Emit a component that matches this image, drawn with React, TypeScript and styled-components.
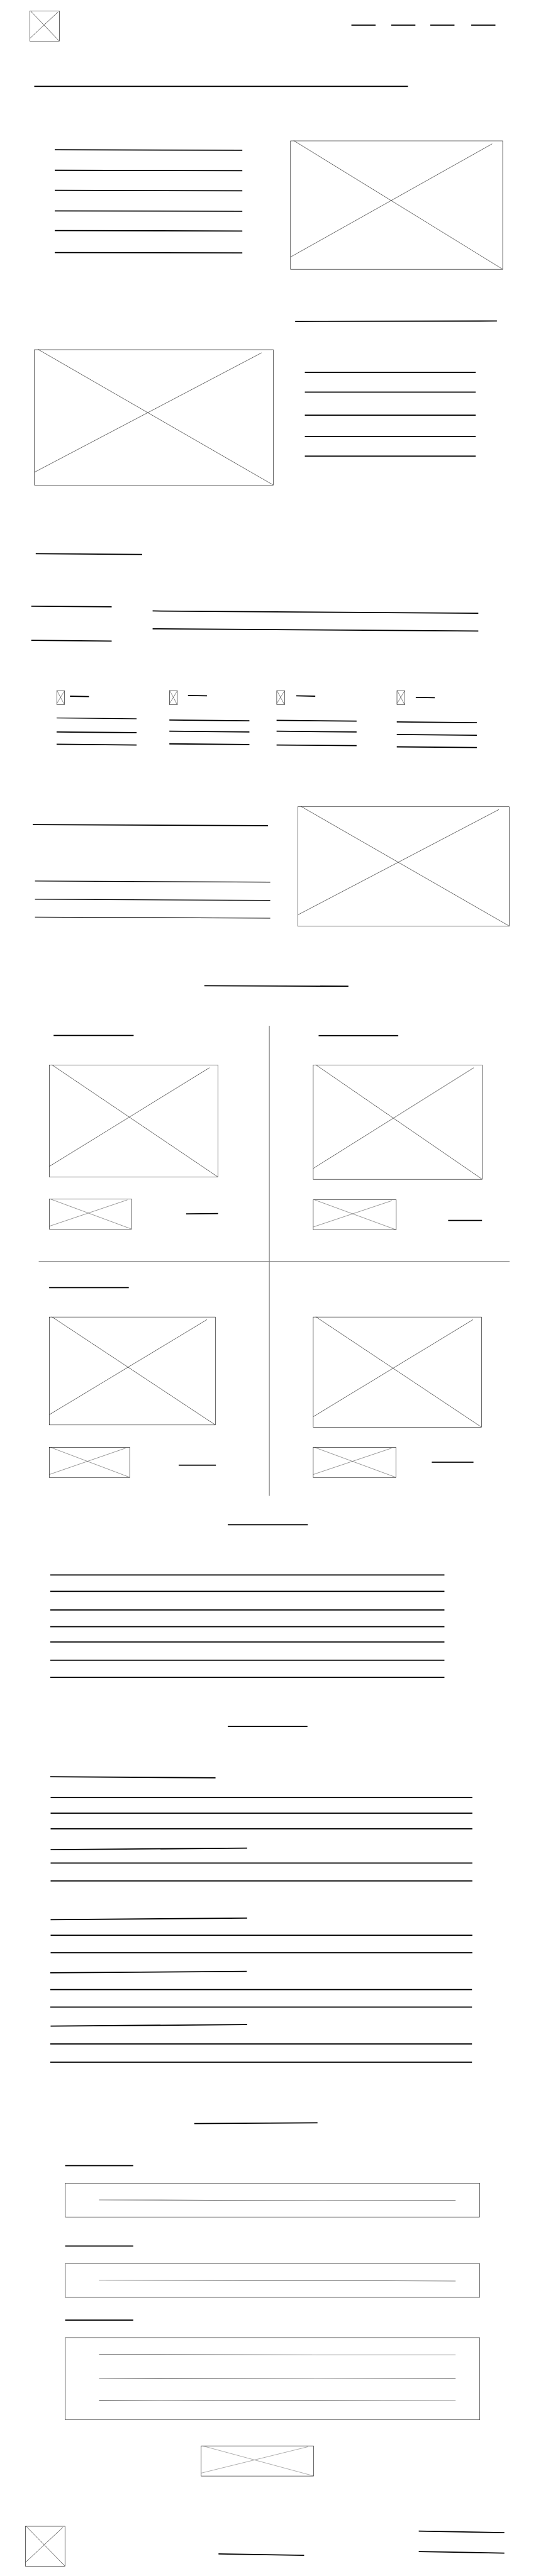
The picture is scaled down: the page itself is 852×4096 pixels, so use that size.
import React from "react";
import styled, { createGlobalStyle, css } from "styled-components";

const ARTBOARD_WIDTH = 1440;
const ARTBOARD_HEIGHT = 6921;
const VIEW_WIDTH = 852;
const VIEW_HEIGHT = 4096;

const GlobalStyle = createGlobalStyle`
  *, *::before, *::after { box-sizing: border-box; }
  html, body { margin: 0; padding: 0; background: #ffffff; }
  body { font-family: "Liberation Sans", Arial, sans-serif; }
`;

const Viewport = styled.div`
  width: ${VIEW_WIDTH}px;
  height: ${VIEW_HEIGHT}px;
  overflow: hidden;
`;

const Artboard = styled.main`
  display: flex;
  flex-direction: column;
  width: ${ARTBOARD_WIDTH}px;
  height: ${ARTBOARD_HEIGHT}px;
  background: #ffffff;
  transform-origin: 0 0;
  transform: scale(${VIEW_WIDTH / ARTBOARD_WIDTH}, ${VIEW_HEIGHT / ARTBOARD_HEIGHT});
`;

type Space = { $mt?: number; $ml?: number };

const space = css<Space>`
  margin-top: ${(p) => p.$mt ?? 0}px;
  margin-left: ${(p) => p.$ml ?? 0}px;
`;

/* ---------- Stroke: a placeholder for one line of text ---------- */

type StrokeProps = Space & {
  $w: number;
  $t?: number;
  $tilt?: number;
  $nudge?: number;
};

const Stroke = styled.div<StrokeProps>`
  ${space}
  flex: none;
  width: ${(p) => p.$w}px;
  height: ${(p) => p.$t ?? 3}px;
  background: #000000;
  transform-origin: 0 0;
  transform: translateY(${(p) => p.$nudge ?? 0}px)
    skewY(${(p) => Math.atan((p.$tilt ?? 0) / p.$w)}rad);
`;

const Stack = styled.div<Space>`
  ${space}
  display: flex;
  flex-direction: column;
  flex: none;
`;

type LinesProps = {
  width: number;
  tops: number[];
  thickness?: number;
  tilt?: number;
  mt?: number;
  ml?: number;
};

/* A paragraph placeholder; tops are measured from the first line. */
function Lines({ width, tops, thickness = 3, tilt = 0, mt, ml }: LinesProps) {
  return (
    <Stack $mt={mt} $ml={ml}>
      {tops.map((top, i) => (
        <Stroke
          key={top}
          $w={width}
          $t={thickness}
          $tilt={tilt}
          $mt={i === 0 ? 0 : top - tops[i - 1] - thickness}
        />
      ))}
    </Stack>
  );
}

/* ---------- Crossed frame: a placeholder for an image or button ---------- */

const Frame = styled.div<Space & { $w: number; $h: number }>`
  ${space}
  flex: none;
  width: ${(p) => p.$w}px;
  height: ${(p) => p.$h}px;
  border: 1px solid #000000;
`;

const Cross = styled.svg`
  display: block;
  width: 100%;
  height: 100%;
  overflow: visible;
  stroke: #000000;
`;

type CrossedProps = {
  w: number;
  h: number;
  mt?: number;
  ml?: number;
  weight?: number;
  reach?: string;
};

function Crossed({ w, h, mt, ml, weight = 1, reach = "95.1%" }: CrossedProps) {
  return (
    <Frame $w={w} $h={h} $mt={mt} $ml={ml}>
      <Cross strokeWidth={weight}>
        <line x1="1.4%" y1="-0.4%" x2="100%" y2="100%" />
        <line x1="0" y1="90.5%" x2={reach} y2="2.2%" />
      </Cross>
    </Frame>
  );
}

/* ---------- Sections ---------- */

const Header = styled.header`
  display: flex;
  align-items: flex-start;
  flex: none;
  height: 200px;
  padding: 29px 0 0 80px;
`;

const Nav = styled.nav`
  display: flex;
  margin: 37px 0 0 784px;
`;

const Row = styled.section<{ $h: number; $inset?: number }>`
  display: flex;
  align-items: flex-start;
  flex: none;
  height: ${(p) => p.$h}px;
  padding-left: ${(p) => p.$inset ?? 0}px;
`;

const Column = styled.section<{ $h: number }>`
  display: flex;
  flex-direction: column;
  align-items: flex-start;
  flex: none;
  height: ${(p) => p.$h}px;
`;

const Feature = styled.article<{ $w: number }>`
  display: flex;
  flex-direction: column;
  flex: none;
  width: ${(p) => p.$w}px;
`;

const FeatureHead = styled.div`
  display: flex;
  align-items: flex-start;
  height: 39px;
`;

const Products = styled.section`
  display: grid;
  grid-template-columns: 591px 1px 646px;
  grid-template-rows: 632px 2px 629px;
  flex: none;
  width: 1238px;
  height: 1263px;
  margin-left: 132px;
`;

const ProductCard = styled.article<{ $col: number; $row: number }>`
  grid-column: ${(p) => p.$col};
  grid-row: ${(p) => p.$row};
  display: flex;
  flex-direction: column;
  align-items: flex-start;
`;

const ProductFoot = styled.div<Space>`
  ${space}
  display: flex;
  align-items: flex-start;
`;

const ColumnRule = styled.div`
  grid-column: 2;
  grid-row: 1 / 4;
  background: #000000;
`;

const RowRule = styled.div`
  grid-column: 1 / 4;
  grid-row: 2;
  margin-left: -28px;
  margin-right: 1px;
  background: #808080;
`;

const Form = styled.form`
  display: flex;
  flex-direction: column;
  align-items: flex-start;
  flex: none;
  height: 990px;
  padding-left: 175px;
`;

const Field = styled.div<Space & { $h: number }>`
  ${space}
  width: 1114px;
  height: ${(p) => p.$h}px;
  padding: 44px 0 0 90px;
  border: 1px solid #000000;
`;

const Footer = styled.footer`
  display: flex;
  align-items: flex-start;
  flex: none;
  padding: 47px 0 0 68px;
`;

const features = [
  { width: 303, labelGap: 14, labelTop: 14, first: 34, tops: [0, 37, 70], thin: true },
  { width: 288, labelGap: 28, labelTop: 12, first: 39, tops: [0, 30, 64], thin: false },
  { width: 323, labelGap: 31, labelTop: 13, first: 40, tops: [0, 29, 66], thin: false },
  { width: 230, labelGap: 29, labelTop: 17, first: 44, tops: [0, 34, 67], thin: false },
];

export default function App() {
  return (
    <>
      <GlobalStyle />
      <Viewport>
        <Artboard>
          <Header>
            <Crossed w={80} h={82} reach="96.5%" />
            <Nav>
              <Stroke $w={65} />
              <Stroke $w={65} $ml={42} />
              <Stroke $w={65} $ml={40} />
              <Stroke $w={65} $ml={45} />
            </Nav>
          </Header>

          {/* Hero */}
          <Column $h={150}>
            <Stroke $w={1004} $mt={30} $ml={92} $nudge={0.5} />
          </Column>
          <Row $h={450}>
            <Lines width={504} tilt={1.1} mt={51} ml={147} tops={[0, 55, 109, 164, 217, 276]} />
            <Crossed w={571} h={346} mt={28} ml={129} />
          </Row>

          {/* About */}
          <Row $h={620}>
            <Crossed w={643} h={365} mt={139} ml={92} />
            <Stack>
              <Stroke $w={542} $tilt={-1} $mt={62} $ml={58} />
              <Lines width={459} mt={134} ml={84} tops={[0, 53, 115, 172, 225]} />
            </Stack>
          </Row>

          {/* Features */}
          <Column $h={130}>
            <Stroke $w={286} $tilt={2} $mt={66} $ml={96} />
          </Column>
          <Row $h={305}>
            <Lines width={216} tilt={2} mt={77} ml={84} tops={[0, 92]} />
            <Lines width={875} tilt={6} mt={90} ml={110} tops={[0, 48]} />
          </Row>
          <Row $h={265} $inset={152}>
            {features.map((f) => (
              <Feature key={f.width} $w={f.width}>
                <FeatureHead>
                  <Crossed w={22} h={39} weight={0.8} reach="99%" />
                  <Stroke $w={51} $tilt={1} $mt={f.labelTop} $ml={f.labelGap} />
                </FeatureHead>
                {f.thin ? (
                  <>
                    <Stroke $w={215} $t={2} $tilt={2} $mt={f.first} />
                    <Lines width={215} tilt={2} mt={35} tops={f.tops.slice(1)} />
                  </>
                ) : (
                  <Lines width={215} tilt={2} mt={f.first} tops={f.tops} />
                )}
              </Feature>
            ))}
          </Row>

          {/* Story */}
          <Row $h={480}>
            <Stack>
              <Stroke $w={632} $tilt={3} $mt={94} $ml={88} />
              <Lines width={632} thickness={2} tilt={3} mt={149} ml={94} tops={[0, 49, 97]} />
            </Stack>
            <Crossed w={569} h={322} mt={47} ml={74} />
          </Row>

          {/* Products */}
          <Column $h={156}>
            <Stroke $w={387} $tilt={1.2} $mt={47} $ml={549} />
          </Column>
          <Products>
            <ColumnRule />
            <RowRule />
            <ProductCard $col={1} $row={1}>
              <Stroke $w={215} $mt={24} $ml={12} $nudge={0.5} />
              <Crossed w={454} h={302} mt={78} />
              <ProductFoot $mt={58}>
                <Crossed w={222} h={82} weight={0.7} />
                <Stroke $w={86} $tilt={-1} $mt={39} $ml={146} />
              </ProductFoot>
            </ProductCard>
            <ProductCard $col={3} $row={1}>
              <Stroke $w={214} $mt={25} $ml={132} />
              <Crossed w={455} h={308} mt={77} ml={117} />
              <ProductFoot $mt={54} $ml={117}>
                <Crossed w={224} h={82} weight={0.7} />
                <Stroke $w={91} $mt={54} $ml={139} $nudge={0.5} />
              </ProductFoot>
            </ProductCard>
            <ProductCard $col={1} $row={3}>
              <Stroke $w={214} $mt={68} />
              <Crossed w={447} h={291} mt={77} />
              <ProductFoot $mt={59}>
                <Crossed w={217} h={82} weight={0.7} />
                <Stroke $w={100} $mt={47} $ml={131} />
              </ProductFoot>
            </ProductCard>
            <ProductCard $col={3} $row={3}>
              <Crossed w={453} h={297} mt={148} ml={117} />
              <ProductFoot $mt={53} $ml={117}>
                <Crossed w={223} h={82} weight={0.7} />
                <Stroke $w={112} $mt={39} $ml={96} />
              </ProductFoot>
            </ProductCard>
          </Products>

          {/* Description */}
          <Column $h={541}>
            <Stroke $w={215} $mt={76} $ml={612} />
            <Lines width={1059} mt={132} ml={135} tops={[0, 44, 94, 139, 180, 229, 275]} />
          </Column>

          {/* Questions */}
          <Column $h={1040}>
            <Stroke $w={214} $mt={77} $ml={612} />
            <Stroke $w={444} $tilt={3} $mt={132} $ml={135} />
            <Lines width={1133} mt={53} ml={136} tops={[0, 42, 84]} />
            <Stroke $w={528} $tilt={-4} $mt={53} $ml={136} />
            <Lines width={1133} mt={33} ml={136} tops={[0, 48]} />
            <Stroke $w={528} $tilt={-4} $mt={101} $ml={136} />
            <Lines width={1133} mt={39} ml={136} tops={[0, 47]} />
            <Stroke $w={528} $tilt={-4} $mt={51} $ml={135} />
            <Lines width={1133} mt={42} ml={135} tops={[0, 47]} />
            <Stroke $w={528} $tilt={-4} $mt={48} $ml={136} />
            <Lines width={1133} mt={45} ml={135} tops={[0, 49]} />
          </Column>

          {/* Contact */}
          <Column $h={150}>
            <Stroke $w={331} $tilt={-2} $mt={104} $ml={522} />
          </Column>
          <Form>
            <Stroke $w={183} $mt={67} />
            <Field $mt={45} $h={92}>
              <Lines width={958} thickness={1} tilt={2} tops={[0]} />
            </Field>
            <Stroke $w={183} $mt={76} />
            <Field $mt={45} $h={92}>
              <Lines width={958} thickness={1} tilt={2} tops={[0]} />
            </Field>
            <Stroke $w={183} $mt={59} />
            <Field $mt={45} $h={222}>
              <Lines width={958} thickness={1} tilt={2} tops={[0, 64, 123]} />
            </Field>
            <Crossed w={303} h={82} mt={69} ml={365} weight={0.55} />
          </Form>

          <Footer>
            <Crossed w={107} h={108} />
            <Stroke $w={230} $tilt={4} $mt={73} $ml={412} />
            <Lines width={230} tilt={4} mt={12} ml={308} tops={[0, 55]} />
          </Footer>
        </Artboard>
      </Viewport>
    </>
  );
}
